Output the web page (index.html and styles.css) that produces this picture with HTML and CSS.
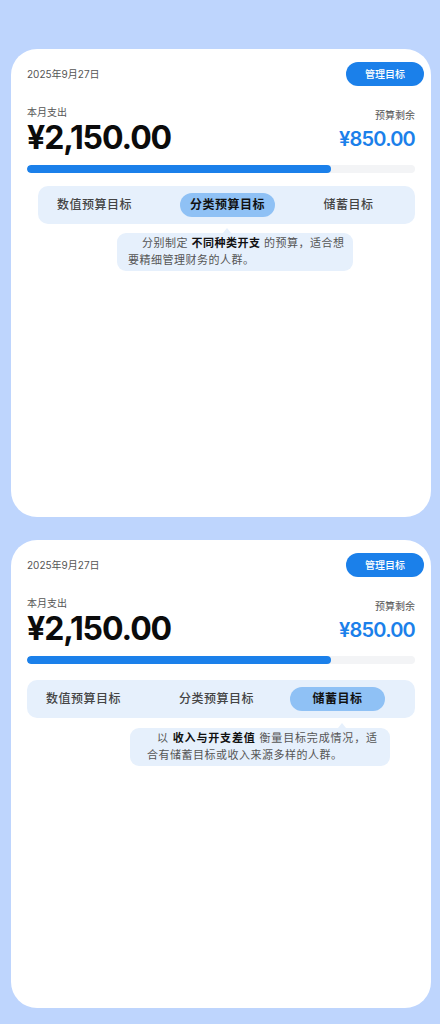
FILE: index.html
```html
<!DOCTYPE html>
<html lang="zh-CN">
<head>
<meta charset="utf-8">
<title>预算目标</title>
<link rel="stylesheet" href="styles.css">
</head>
<body>
  <section class="card">
    <div class="card-head">
      <span class="date">2025年9月27日</span>
      <button class="manage-btn">管理目标</button>
    </div>
    <div class="summary">
      <div class="spent">
        <div class="label">本月支出</div>
        <div class="spent-amount">¥2,150.00</div>
      </div>
      <div class="remain">
        <div class="label">预算剩余</div>
        <div class="remain-amount">¥850.00</div>
      </div>
    </div>
    <div class="progress"><div class="progress-fill" style="width:78.4%"></div></div>
    <div class="tabs tabs-inset">
      <div class="tab tab-first">数值预算目标</div>
      <div class="tab tab-second active">分类预算目标</div>
      <div class="tab">储蓄目标</div>
    </div>
    <div class="tip tip-category">
      <div class="tip-line tip-first">分别制定 <b>不同种类开支</b> 的预算，适合想</div>
      <div class="tip-line">要精细管理财务的人群。</div>
    </div>
  </section>

  <section class="card">
    <div class="card-head">
      <span class="date">2025年9月27日</span>
      <button class="manage-btn">管理目标</button>
    </div>
    <div class="summary">
      <div class="spent">
        <div class="label">本月支出</div>
        <div class="spent-amount">¥2,150.00</div>
      </div>
      <div class="remain">
        <div class="label">预算剩余</div>
        <div class="remain-amount">¥850.00</div>
      </div>
    </div>
    <div class="progress"><div class="progress-fill" style="width:78.4%"></div></div>
    <div class="tabs tabs-wide">
      <div class="tab tab-first">数值预算目标</div>
      <div class="tab tab-second">分类预算目标</div>
      <div class="tab active">储蓄目标</div>
    </div>
    <div class="tip tip-saving">
      <div class="tip-line tip-first">以 <b>收入与开支差值</b> 衡量目标完成情况，适</div>
      <div class="tip-line">合有储蓄目标或收入来源多样的人群。</div>
    </div>
  </section>
</body>
</html>
```

FILE: styles.css
```css
* { box-sizing: border-box; }

html, body {
  margin: 0;
  padding: 0;
}

body {
  background: #bed5fd;
  padding-top: 49px;
  height: 1024px;
  overflow: hidden;
  font-family: Inter, "Noto Sans CJK SC", sans-serif;
  color: #111;
}

.card {
  background: #ffffff;
  border-radius: 26px;
  height: 468px;
  margin: 0 9px 23px 11px;
  padding: 13px 16px 0 16px;
}

.card-head {
  display: flex;
  justify-content: space-between;
  align-items: center;
  height: 24px;
}

.date {
  font-size: 10px;
  line-height: 14px;
  color: #555;
}

.manage-btn {
  border: 0;
  margin: 0 -9px 0 0;
  padding: 0;
  width: 78px;
  height: 24px;
  border-radius: 12px;
  background: #1b80ea;
  color: #fff;
  font-family: Inter, "Noto Sans CJK SC", sans-serif;
  font-size: 10px;
  font-weight: 500;
  line-height: 24px;
  text-align: center;
}

.summary {
  display: flex;
  justify-content: space-between;
  align-items: flex-start;
  margin-top: 19px;
  height: 52px;
}

.label {
  font-size: 10px;
  line-height: 14px;
  color: #555;
}

.spent-amount {
  font-size: 32px;
  line-height: 38px;
  font-weight: 700;
  letter-spacing: -1.1px;
  color: #0b0b0b;
}

.remain {
  padding-top: 3px;
  text-align: right;
}

.remain-amount {
  margin-top: 5px;
  font-size: 20px;
  line-height: 24px;
  font-weight: 600;
  letter-spacing: -0.8px;
  color: #1b80ea;
}

.progress {
  margin-top: 8px;
  height: 8px;
  border-radius: 4px;
  background: #f3f4f6;
  overflow: hidden;
}

.progress-fill {
  height: 100%;
  border-radius: 4px;
  background: #1b80ea;
}

.tabs {
  display: flex;
  align-items: center;
  height: 38px;
  padding: 0 0 0 9px;
  border-radius: 10px;
  background: #e6f0fc;
}

.tabs-inset {
  margin: 13px 0 0 11px;
}

.tabs-wide {
  margin: 16px 0 0 0;
}

.tab {
  width: 95px;
  height: 24px;
  border-radius: 12px;
  font-size: 12px;
  font-weight: 500;
  line-height: 24px;
  letter-spacing: 0.5px;
  text-align: center;
  color: #444;
}

.tab-first { margin-right: 38px; }
.tab-second { margin-right: 26px; }

.tab.active {
  background: #8fc1f5;
  color: #111;
  font-weight: 700;
}

.tip {
  position: relative;
  border-radius: 9px;
  background: #e6f0fc;
  padding: 2px 0;
  font-size: 11px;
  line-height: 17px;
  color: #555;
}

.tip::before {
  content: "";
  position: absolute;
  top: -5px;
  width: 0;
  height: 0;
  border-left: 4px solid transparent;
  border-right: 4px solid transparent;
  border-bottom: 5px solid #e6f0fc;
}

.tip b {
  color: #111;
  font-weight: 700;
}

.tip-category {
  margin: 9px 0 0 90px;
  width: 236px;
  padding-left: 11px;
  padding-right: 9px;
}

.tip-category::before { left: 106px; }

.tip-category .tip-first { text-indent: 14px; }

.tip-saving {
  margin: 10px 0 0 103px;
  width: 260px;
  padding-left: 17px;
  padding-right: 13px;
}

.tip-saving::before { left: 208px; }

.tip-saving .tip-first { text-indent: 10px; }

.tip-line {
  letter-spacing: 0.5px;
}

.tip-first {
  letter-spacing: 0;
  text-align: justify;
  text-align-last: justify;
}
```
